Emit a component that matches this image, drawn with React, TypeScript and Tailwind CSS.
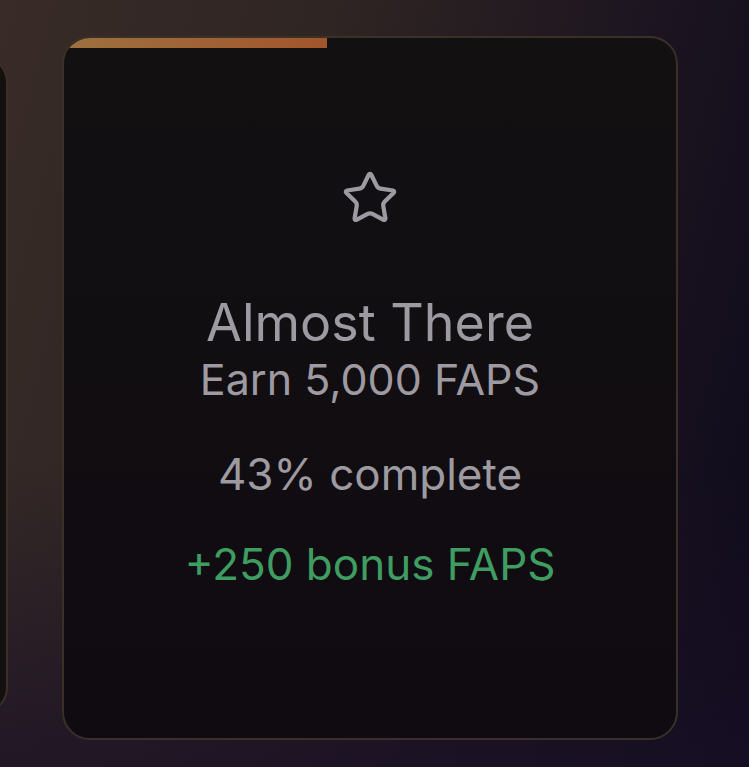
import { Star } from 'lucide-react';

export default function App() {
  const progress = 43;

  return (
    <div
      className="relative w-[749px] h-[767px] overflow-hidden flex items-start bg-[linear-gradient(105deg,#382b28_0%,#2f2523_35%,#1c1420_70%,#0d0a1b_100%)]"
      style={{ fontFamily: 'Inter, "Noto Sans", sans-serif' }}
    >
      {/* purple tint toward the bottom */}
      <div className="absolute inset-0 bg-[linear-gradient(180deg,rgba(0,0,0,0)_60%,rgba(26,16,38,0.7)_100%)]" />

      {/* previous card, mostly off screen */}
      <div className="relative shrink-0 w-[300px] h-[660px] mt-[55px] -ml-[292px] rounded-[28px] border-2 border-[#3a3027] bg-[#14100f]" />

      {/* achievement card */}
      <div className="relative shrink-0 ml-[54px] mt-[36px] w-[616px] h-[704px] rounded-[28px] border-2 border-[#3a3027] bg-[linear-gradient(180deg,#131012_0%,#0f0b11_100%)] overflow-hidden flex flex-col">
        <div
          className="h-[10px] bg-[linear-gradient(90deg,#9d713f,#a3552b)]"
          style={{ width: `${progress}%` }}
        />
        <div className="flex flex-col items-center text-[#9e9aa1]">
          <Star size={58} strokeWidth={1.75} className="mt-[121px]" />
          <div className="mt-[70px] text-[52px] leading-none">Almost There</div>
          <div className="mt-[9px] text-[43px] leading-none">Earn 5,000 FAPS</div>
          <div className="mt-[51px] text-[44px] leading-none">{progress}% complete</div>
          <div className="mt-[46px] text-[44px] leading-none text-[#3f9d61]">+250 bonus FAPS</div>
        </div>
      </div>
    </div>
  );
}
